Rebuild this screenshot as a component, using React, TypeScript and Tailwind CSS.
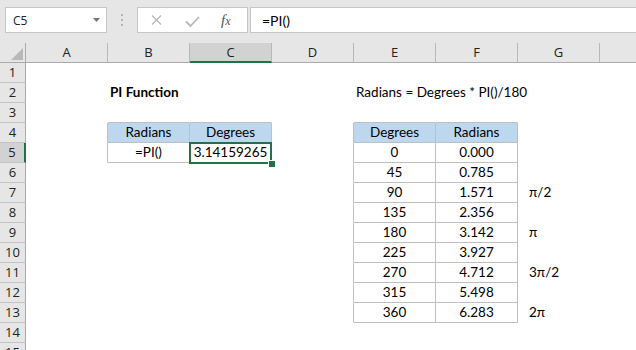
import clsx from "clsx";

type Cell = {
    text: string
    center?: boolean
    bold?: boolean
    indent?: boolean
}

const COLS = ["A", "B", "C", "D", "E", "F", "G", "H"];
const ROWS = Array.from({ length: 15 }, (_, i) => i + 1);
const DEGREES = [0, 45, 90, 135, 180, 225, 270, 315, 360];

const cells: Record<string, Cell> = {
    B2: { text: "PI Function", bold: true },
    E2: { text: "Radians = Degrees * PI()/180" },
    B4: { text: "Radians", center: true },
    C4: { text: "Degrees", center: true },
    B5: { text: "=PI()", center: true },
    C5: { text: "3.14159265", center: true },
    E4: { text: "Degrees", center: true },
    F4: { text: "Radians", center: true },
    G7: { text: "π/2", indent: true },
    G9: { text: "π", indent: true },
    G11: { text: "3π/2", indent: true },
    G13: { text: "2π", indent: true },
};

DEGREES.forEach((d, i) => {
    cells[`E${5 + i}`] = { text: String(d), center: true };
    cells[`F${5 + i}`] = { text: ((d * Math.PI) / 180).toFixed(3), center: true };
});

// the two bordered tables: B4:C5 and E4:F13
function inTable(r: number, c: number) {
    if (r >= 4 && r <= 5 && c >= 1 && c <= 2) return true;
    if (r >= 4 && r <= 13 && c >= 4 && c <= 5) return true;
    return false;
}

function Toolbar() {
    return (
        <div className="flex h-[43px] items-start bg-[#e6e6e6] pt-[7px]">
            {/* name box */}
            <div className="ml-[5px] flex h-[26px] w-[102px] shrink-0 items-center justify-between border border-[#c6c6c6] bg-white pl-[7px] pr-[6px] font-['Open_Sans',sans-serif] text-[12px] text-[#222]">
                <span className="pt-[1px]">C5</span>
                <svg width="7" height="4" viewBox="0 0 7 4">
                    <path d="M0 0H7L3.5 4Z" fill="#777" />
                </svg>
            </div>

            <div className="flex h-[26px] w-[30px] shrink-0 flex-col items-center justify-center gap-[3px]">
                <span className="h-[2px] w-[2px] bg-[#b4b4b4]" />
                <span className="h-[2px] w-[2px] bg-[#b4b4b4]" />
                <span className="h-[2px] w-[2px] bg-[#b4b4b4]" />
            </div>

            {/* cancel / enter / insert function */}
            <div className="flex h-[26px] w-[111px] shrink-0 items-center border border-[#c6c6c6] bg-white">
                <svg className="ml-[13px]" width="11" height="10" viewBox="0 0 11 10">
                    <path d="M1 0.5L10 9.5M10 0.5L1 9.5" stroke="#b8b8b8" strokeWidth="1.3" fill="none" />
                </svg>
                <svg className="ml-[23px] mt-[3px]" width="15" height="11" viewBox="0 0 15 11">
                    <path d="M1 5.5L5.5 10L14 1" stroke="#b8b8b8" strokeWidth="1.8" fill="none" />
                </svg>
                <span className="ml-[21px] font-['Liberation_Serif',serif] text-[15px] italic leading-none text-[#555]">
                    f<span className="text-[12px]">x</span>
                </span>
            </div>

            {/* formula input */}
            <div className="ml-[2px] flex h-[26px] flex-1 items-center border border-r-0 border-[#c6c6c6] bg-white pl-[11px] font-['Lato',sans-serif] text-[14px] text-black">
                =PI()
            </div>
        </div>
    );
}

function HeaderRow() {
    return (
        <>
            <div className="flex items-end justify-end border-b border-r border-[#ababab] bg-[#e6e6e6] pb-[2px] pr-[2px]">
                <svg width="12" height="12" viewBox="0 0 12 12">
                    <path d="M12 0V12H0Z" fill="#b8b8b8" />
                </svg>
            </div>
            {COLS.map((col) => (
                <div
                    key={col}
                    className={clsx(
                        "flex items-center justify-center border-r border-r-[#b8b8b8] font-['Open_Sans',sans-serif] text-[13px] leading-[19px] text-[#222]",
                        col === "C"
                            ? "border-b-2 border-b-[#217346] bg-[#d2d2d2]"
                            : "border-b border-b-[#ababab] bg-[#e6e6e6]"
                    )}
                >
                    {/* H sits mostly past the window edge: its letter is not in view */}
                    {col !== "H" && col}
                </div>
            ))}
        </>
    );
}

function SheetCell({ r, c }: { r: number; c: number }) {
    const key = `${COLS[c]}${r}`;
    const cell = cells[key];
    const right = inTable(r, c) || inTable(r, c + 1);
    const bottom = inTable(r, c) || inTable(r + 1, c);
    const selected = key === "C5";

    return (
        <div
            className={clsx(
                "flex min-w-0 items-center whitespace-nowrap border-b border-r font-['Lato',sans-serif] text-[13.5px] leading-[19px] text-black",
                right ? "border-r-[#bfbfbf]" : "border-r-transparent",
                bottom ? "border-b-[#bfbfbf]" : "border-b-transparent",
                r === 4 && inTable(r, c) && "bg-[#bdd7ee]",
                cell?.center ? "justify-center" : cell?.indent ? "pl-[11px]" : "pl-[2px]",
                cell?.bold && "font-bold",
                selected && "relative"
            )}
        >
            {cell && <span>{cell.text}</span>}
            {selected && (
                <>
                    <div className="absolute -bottom-[2px] -left-[1px] -right-[1px] -top-[1px] border-2 border-[#217346]" />
                    <div className="absolute -bottom-[5px] -right-[4px] h-[6px] w-[6px] bg-[#217346] ring-1 ring-white" />
                </>
            )}
        </div>
    );
}

export default function App() {
    return (
        <div className="h-[350px] w-[636px] overflow-hidden bg-white">
            <Toolbar />
            <div className="grid w-[682px] auto-rows-[20px] grid-cols-[26px_repeat(8,82px)] bg-white">
                <HeaderRow />
                {ROWS.map((r) => (
                    <div key={r} className="contents">
                        <div
                            className={clsx(
                                "flex items-center justify-center border-b border-b-[#c3c3c3] font-['Open_Sans',sans-serif] text-[13px] leading-[19px] text-[#222]",
                                r === 5
                                    ? "border-r-2 border-r-[#217346] bg-[#d2d2d2]"
                                    : "border-r border-r-[#ababab] bg-[#e6e6e6]"
                            )}
                        >
                            {r}
                        </div>
                        {COLS.map((_, c) => (
                            <div key={c} className="contents">
                                <SheetCell r={r} c={c} />
                            </div>
                        ))}
                    </div>
                ))}
            </div>
        </div>
    );
}
